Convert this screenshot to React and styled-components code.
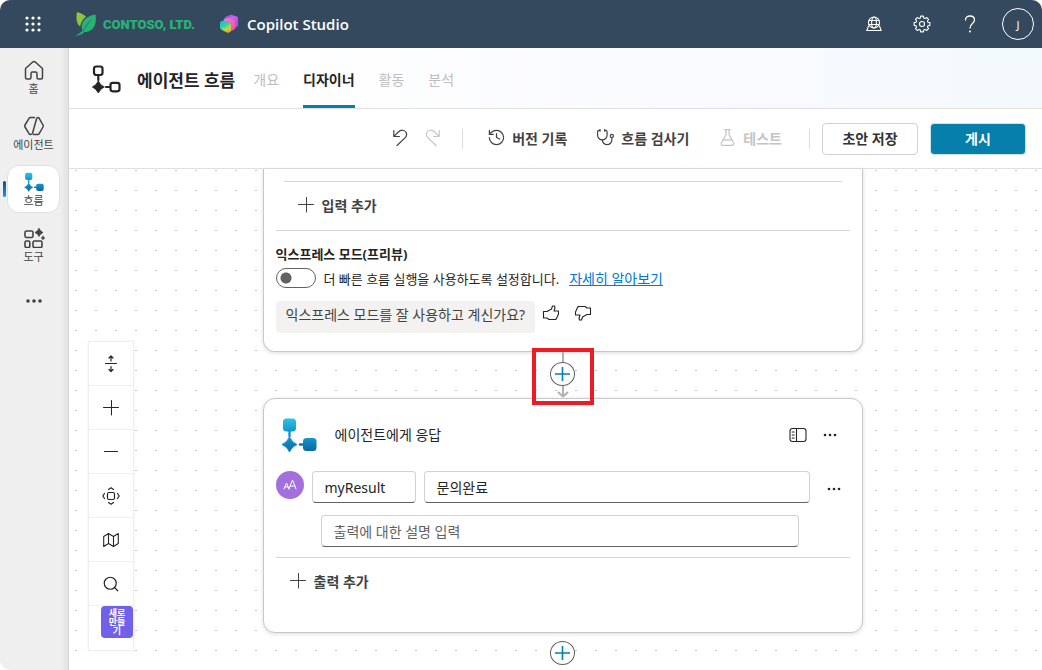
import React, { useState } from 'react'
import styled, { createGlobalStyle, css } from 'styled-components'
import { History, Stethoscope, FlaskConical, Search } from 'lucide-react'

const GlobalStyle = createGlobalStyle`
    * {
        box-sizing : border-box;
    }
    body {
        margin : 0;
        background-color : #ffffff;
        color : #242424;
        font-family : "Noto Sans", "Noto Sans CJK KR", sans-serif;
        font-size : 14px;
    }
    button, input {
        font-family : inherit;
        color : inherit;
    }
    svg {
        display : block;
        flex-shrink : 0;
    }
`;

const Page = styled.div`
    display : flex;
    flex-direction : column;
    min-height : 100vh;
    border-radius : 10px;
    overflow : hidden;
`;
const TopBar = styled.header`
    display : flex;
    align-items : center;
    justify-content : space-between;
    height : 48px;
    padding-left : 17px;
    background-color : #34495e;
    color : #ffffff;
`;
const Group = styled.div`
    display : flex;
    align-items : center;
`;
const IconButton = styled.button`
    display : flex;
    align-items : center;
    justify-content : center;
    width : ${(props) => props.$size || 16}px;
    height : ${(props) => props.$height || props.$size || 16}px;
    padding : 0;
    border : none;
    background : none;
    cursor : pointer;
`;
const Brand = styled.a`
    display : flex;
    align-items : center;
    gap : 6px;
    margin : 0 24px 0 26px;
    color : #27b376;
    font-family : Roboto, sans-serif;
    font-size : 13px;
    font-weight : 900;
    text-decoration : none;
    white-space : nowrap;
`;
const Product = styled.a`
    display : flex;
    align-items : center;
    gap : 8px;
    color : #ffffff;
    font-family : "Open Sans", sans-serif;
    font-size : 15px;
    font-weight : 600;
    text-decoration : none;
    white-space : nowrap;
`;
const Avatar = styled.span`
    display : flex;
    align-items : center;
    justify-content : center;
    width : 32px;
    height : 32px;
    border : 1px solid #ffffff;
    border-radius : 50%;
    font-size : 11px;
`;

const Body = styled.div`
    display : flex;
    flex : 1;
`;
const Sidebar = styled.nav`
    display : flex;
    flex-direction : column;
    gap : 8px;
    flex-shrink : 0;
    width : 69px;
    padding : 5px 8px 0 7px;
    border-right : 1px solid #d6d6d6;
    background : linear-gradient(to right, #efefef 60px, #e2e2e2);
`;
const NavItem = styled.a`
    position : relative;
    display : flex;
    flex-direction : column;
    align-items : center;
    gap : 1px;
    height : 48px;
    padding-top : 6px;
    border : 1px solid transparent;
    border-radius : 12px;
    color : #424242;
    font-size : 11px;
    line-height : 16px;
    text-decoration : none;
    white-space : nowrap;
    ${(props) => props.$active && css`
        border-color : #e0e0e0;
        background-color : #ffffff;
        &::before {
            content : "";
            position : absolute;
            left : -5px;
            top : 15px;
            width : 3px;
            height : 16px;
            border-radius : 2px;
            background : linear-gradient(#0b4a8f, #1a9bd0);
        }
    `}
`;
const MoreNav = styled.div`
    display : flex;
    align-items : center;
    justify-content : center;
    height : 48px;
    color : #424242;
`;

const Main = styled.main`
    display : flex;
    flex-direction : column;
    flex : 1;
    min-width : 0;
`;
const PageHeader = styled.div`
    display : flex;
    align-items : center;
    height : 61px;
    padding : 3px 23px 0;
    border-bottom : 1px solid #e0e0e0;
    background : linear-gradient(to right, #ffffff 20%, #f9faff 60%, #f4f9fb);
`;
const Title = styled.h1`
    margin : 0 18px 0 15px;
    font-size : 17px;
    font-weight : 700;
    white-space : nowrap;
`;
const Tabs = styled.div`
    display : flex;
    align-self : stretch;
    gap : 24px;
`;
const Tab = styled.button`
    padding : 2px 0 0;
    border : none;
    border-bottom : 3px solid ${(props) => (props.$active ? "#067fab" : "transparent")};
    background : none;
    color : ${(props) => (props.$active ? "#242424" : "#bdbdbd")};
    font-size : 14px;
    font-weight : ${(props) => (props.$active ? 700 : 400)};
    white-space : nowrap;
`;

const Toolbar = styled.div`
    display : flex;
    align-items : center;
    justify-content : flex-end;
    gap : 5px;
    height : 60px;
    padding-right : 16px;
    border-bottom : 1px solid #e0e0e0;
    background-color : #ffffff;
`;
const ToolButton = styled.button`
    display : flex;
    align-items : center;
    gap : 6px;
    height : 32px;
    padding : 0 ${(props) => (props.$iconOnly ? 6 : 12)}px 2px;
    border : none;
    background : none;
    color : #424242;
    font-size : 14px;
    font-weight : 700;
    white-space : nowrap;
    &:disabled {
        color : #c4c4c4;
    }
`;
const Separator = styled.span`
    width : 1px;
    height : 20px;
    margin : 0 7px 0 10px;
    background-color : #dcdcdc;
`;
const Actions = styled.div`
    display : flex;
    gap : 12px;
`;
const ActionButton = styled.button`
    width : 96px;
    height : 32px;
    padding : 0 0 2px;
    border : 1px solid ${(props) => (props.$primary ? "#cfe3ec" : "#d1d1d1")};
    border-radius : 4px;
    background-color : ${(props) => (props.$primary ? "#067fab" : "#ffffff")};
    color : ${(props) => (props.$primary ? "#ffffff" : "#333333")};
    font-size : 14px;
    font-weight : 700;
`;

const Canvas = styled.div`
    position : relative;
    display : flex;
    flex-direction : column;
    align-items : center;
    flex : 1;
    padding-left : 14px;
    background : conic-gradient(from 90deg at 18px 19px, #c4c4c4 90deg, #ffffff 0) 8px 2px / 20px 20px;
`;
const Card = styled.section`
    width : 600px;
    max-width : 100%;
    padding : 12px 12px ${(props) => (props.$cut ? 18 : 26)}px;
    border : 1px solid #c8c8c8;
    border-radius : 12px;
    background-color : #ffffff;
    box-shadow : 0 1px 4px rgba(0, 0, 0, 0.14);
    ${(props) => props.$cut && css`
        border-top : none;
        border-radius : 0 0 12px 12px;
    `}
`;
const Section = styled.div`
    border-top : 1px solid #d6d6d6;
    margin : 0 ${(props) => (props.$inset ? 8 : 0)}px;
`;
const AddButton = styled.button`
    display : flex;
    align-items : center;
    gap : 8px;
    height : 48px;
    padding : 0 14px 2px;
    border : none;
    background : none;
    color : #424242;
    font-size : 14px;
    font-weight : 700;
`;
const SubTitle = styled.h2`
    margin : 14px 0 5px;
    font-size : 13px;
    font-weight : 700;
    line-height : 18px;
`;
const SwitchRow = styled.div`
    display : flex;
    align-items : center;
    height : 20px;
    font-size : 13px;
    white-space : nowrap;
`;
const Switch = styled.input`
    appearance : none;
    width : 40px;
    height : 20px;
    margin : 0 8px 0 0;
    border : 1px solid #616161;
    border-radius : 10px;
    background : radial-gradient(circle at ${(props) => (props.checked ? "29px" : "9px")} 9px, #616161 5px, #ffffff 6px);
`;
const LearnMore = styled.a`
    margin-left : 10px;
    color : #0078d4;
    font-size : 14px;
`;
const Feedback = styled.div`
    display : flex;
    align-items : flex-start;
    margin-top : 13px;
`;
const Question = styled.span`
    height : 32px;
    padding : 0 10px;
    border-radius : 4px;
    background-color : #f3f2f1;
    color : #424242;
    line-height : 28px;
    white-space : nowrap;
`;
const Connector = styled.div`
    position : relative;
    display : flex;
    flex-direction : column;
    align-items : center;
    padding-top : ${(props) => (props.$end ? 8 : 0)}px;
    height : ${(props) => (props.$end ? 32 : 46)}px;
`;
const Line = styled.span`
    width : 2px;
    height : 10px;
    background-color : #b3b0ad;
`;
const Insert = styled.button`
    display : flex;
    align-items : center;
    justify-content : center;
    width : 25px;
    height : 24px;
    padding : 0;
    border : 1px solid #616161;
    border-radius : 50%;
    background-color : #ffffff;
    color : #067fab;
`;
const Highlight = styled.div`
    position : absolute;
    top : -4px;
    left : 50%;
    width : 62px;
    height : 57px;
    margin-left : -31px;
    border : 4px solid #ed1c24;
    pointer-events : none;
`;
const CardHeader = styled.div`
    display : flex;
    align-items : center;
    height : 48px;
    padding : 0 12px 0 5px;
`;
const CardTitle = styled.h2`
    flex : 1;
    margin : 0 18px;
    padding-bottom : 2px;
    font-size : 14px;
    font-weight : 400;
`;
const FieldRow = styled.div`
    display : flex;
    align-items : flex-start;
    gap : 8px;
    padding : 12px 8px 0 0;
`;
const TypeBadge = styled.span`
    display : flex;
    align-items : center;
    justify-content : center;
    flex-shrink : 0;
    width : 28px;
    height : 28px;
    border-radius : 50%;
    background-color : #a36fdc;
    color : #ffffff;
`;
const Field = styled.input`
    width : ${(props) => props.$width || "auto"};
    flex : ${(props) => (props.$width ? "none" : "1")};
    min-width : 0;
    height : 32px;
    padding : 0 12px;
    border : 1px solid #d1d1d1;
    border-bottom-color : #616161;
    border-radius : 4px;
    background-color : #ffffff;
    font-size : 14px;
    &::placeholder {
        color : #616161;
        opacity : 1;
    }
`;
const DescriptionRow = styled.div`
    display : flex;
    padding : 8px 51px 10px 45px;
`;
const Gap = styled.span`
    width : ${(props) => props.$width}px;
`;

const Palette = styled.div`
    position : absolute;
    left : 19px;
    bottom : 19px;
    width : 46px;
    border : 1px solid #efefef;
    background-color : #ffffff;
    box-shadow : 0 0 2px rgba(0, 0, 0, 0.08);
`;
const PaletteButton = styled(IconButton)`
    width : 44px;
    height : 44px;
    border-bottom : 1px solid #efefef;
    color : #242424;
`;
const PaletteEnd = styled.div`
    display : flex;
    align-items : flex-start;
    justify-content : flex-end;
    height : 44px;
`;
const NewBadge = styled.button`
    width : 32px;
    height : 32px;
    padding : 0 6px 2px;
    border : none;
    border-radius : 4px;
    background-color : #7160e8;
    color : #ffffff;
    font-size : 9px;
    font-weight : 700;
    line-height : 9px;
    word-break : break-all;
`;

const star = (cx, cy, r) => {
    const k = r * 0.3;
    return `M${cx} ${cy - r}Q${cx + k} ${cy - k} ${cx + r} ${cy}Q${cx + k} ${cy + k} ${cx} ${cy + r}Q${cx - k} ${cy + k} ${cx - r} ${cy}Q${cx - k} ${cy - k} ${cx} ${cy - r}Z`;
};

const gear = () => {
    const points = [];
    for (let i = 0; i < 8; i++) {
        [[-16, 6.2], [-10, 8], [10, 8], [16, 6.2]].forEach(([offset, r]) => {
            const a = ((i * 45 + offset) * Math.PI) / 180;
            points.push(`${(9 + r * Math.sin(a)).toFixed(2)} ${(9 - r * Math.cos(a)).toFixed(2)}`);
        });
    }
    return "M" + points.join("L") + "Z";
};

const Svg = ({ w = 16, h, box, children, ...rest }) => (
    <svg width={w} height={h || w} viewBox={box || `0 0 ${w} ${h || w}`} fill="none" stroke="currentColor" strokeWidth="1.1" strokeLinecap="round" strokeLinejoin="round" aria-hidden="true" {...rest}>
        {children}
    </svg>
);

const Dots = ({ size = 16, r = 1.3, gap = 5 }) => (
    <Svg w={size} fill="currentColor" stroke="none">
        {[-1, 0, 1].map((n) => <circle key={n} cx={size / 2 + n * gap} cy={size / 2} r={r} />)}
    </Svg>
);

const Waffle = () => (
    <Svg fill="currentColor" stroke="none">
        {[2, 8, 14].map((y) => [2, 8, 14].map((x) => <circle key={x + "-" + y} cx={x} cy={y} r="1.6" />))}
    </Svg>
);

const Leaf = () => (
    <Svg w={22} h={24} stroke="none">
        <path d="M2 0C1 5 1 11 5 14.500C6 10 8 7 11 4.500C8.500 2 5 1 2 0Z" fill="#8cc63f" />
        <path d="M20.500 2.500C11 4 4.500 10 7.500 18.500C5.500 21 3 22.500 0 23.500C4 24 7 22.500 9.500 20C19 20 22 12 20.500 2.500Z" fill="#27b376" />
        <path d="M8 19.500C10 15 12.500 11.500 16 8" fill="none" stroke="#34495e" strokeWidth="0.600" />
    </Svg>
);

const CopilotLogo = () => (
    <Svg w={20} stroke="none">
        <defs>
            <linearGradient id="cpBack" x1="0" y1="0" x2="1" y2="1">
                <stop offset="0" stopColor="#3c6ff5" />
                <stop offset="0.4" stopColor="#d858f0" />
                <stop offset="1" stopColor="#8a4af0" />
            </linearGradient>
            <linearGradient id="cpMid" x1="0" y1="0" x2="1" y2="1">
                <stop offset="0" stopColor="#ff7ac0" />
                <stop offset="1" stopColor="#f0509a" />
            </linearGradient>
            <linearGradient id="cpFront" x1="0.1" y1="0" x2="0.6" y2="1">
                <stop offset="0" stopColor="#1fb4f0" />
                <stop offset="0.45" stopColor="#2fd0a8" />
                <stop offset="0.75" stopColor="#b8dc40" />
                <stop offset="1" stopColor="#f5a03c" />
            </linearGradient>
        </defs>
        <path d="M6 3L11 1Q12 .6 13 1L18 2.500Q19 3 19 4V11Q19 12.500 18 13L12 16L5 10Z" fill="url(#cpBack)" />
        <path d="M5 5L9 4Q10 3.600 11 4L15 6Q16 6.500 16 7.500V14Q16 15.500 14.500 16L10 18L4 12Z" fill="url(#cpMid)" />
        <path d="M1 9Q1 7.500 2.500 7L4.500 6.500Q6 6.200 7 7L11 9Q12 9.800 12 11V17L10 18.500Q9 19 8 18.500L3 16Q1 15 1 13.500Z" fill="url(#cpFront)" />
    </Svg>
);

const FlowOutline = () => (
    <Svg w={30} strokeWidth="2.200">
        <rect x="2" y="1.500" width="8.500" height="8.500" rx="2.200" />
        <path d="M6.300 10.500V15M14 22H17.500" />
        <rect x="18.500" y="17.800" width="9" height="8.500" rx="2.200" />
        <path d={star(6.3, 22, 6)} fill="currentColor" strokeWidth="0.800" />
    </Svg>
);

const FlowLogo = ({ size, id }) => (
    <Svg w={size} box="0 0 36 36" stroke="none">
        <defs>
            <linearGradient id={id + "a"} x1="0" y1="0" x2="0" y2="1">
                <stop offset="0" stopColor="#2cc3ea" />
                <stop offset="1" stopColor="#1296c8" />
            </linearGradient>
            <linearGradient id={id + "b"} x1="0" y1="0" x2="0" y2="1">
                <stop offset="0" stopColor="#1596cc" />
                <stop offset="1" stopColor="#0a67a3" />
            </linearGradient>
        </defs>
        <rect x="2" y="1.500" width="13" height="13" rx="3.500" fill={`url(#${id}a)`} />
        <path d="M8.500 14V19" stroke="#1296c8" strokeWidth="2.400" />
        <path d="M19 27.500H23" stroke="#0d74ae" strokeWidth="2.400" />
        <rect x="22" y="21" width="13.500" height="13" rx="3.500" fill={`url(#${id}b)`} />
        <path d={star(8.5, 27.5, 7.5)} fill={`url(#${id}b)`} stroke="#0f80b8" strokeWidth="0.800" />
    </Svg>
);

const HomeIcon = () => (
    <Svg w={20} strokeWidth="1.500">
        <path d="M1.500 8.500L9 1.800Q10 1 11 1.800L18.500 8.500V17.500Q18.500 19 17 19H14.500Q13 19 13 17.500V13.500Q13 12 11.500 12H8.500Q7 12 7 13.500V17.500Q7 19 5.500 19H3Q1.500 19 1.500 17.500Z" />
    </Svg>
);

const AgentIcon = () => (
    <Svg w={20} strokeWidth="1.500">
        <path d="M10.500 1.500H6.500Q5.500 1.500 5 2.400L1 9Q.5 10 1 11L5 17.600Q5.500 18.500 6.500 18.500Q8 18.500 8.500 17.200L12.500 3Q13 1.500 14 1.500Q14.700 1.500 15.200 2.400L19 9Q19.500 10 19 11L15.200 17.600Q14.700 18.500 13.600 18.500H9.500" />
    </Svg>
);

const ToolsIcon = () => (
    <Svg w={22} h={20} strokeWidth="1.600">
        <rect x="2" y="3" width="8" height="6.500" rx="1.500" />
        <rect x="2" y="13" width="4.800" height="6.500" rx="1.500" />
        <rect x="10" y="13" width="9" height="6.500" rx="1.500" />
        <path d={star(16, 4.5, 4)} fill="currentColor" strokeWidth="0.800" />
        <path d={star(20, 10, 1.8)} fill="currentColor" strokeWidth="0.600" />
    </Svg>
);

const GlobeIcon = () => (
    <Svg strokeWidth="1.100">
        <circle cx="8" cy="6.500" r="5.500" />
        <ellipse cx="8" cy="6.500" rx="2.400" ry="5.500" />
        <path d="M3 4.500H13M3 8.500H13M2.500 10L.8 14.500H15.200L13.500 10" />
    </Svg>
);

const UndoIcon = ({ flip }) => (
    <Svg w={16} h={18} transform={flip ? "scale(-1 1)" : undefined} strokeWidth="1.200">
        <path d="M1.800 1.500V7.500H7.500M2 7.300L6.300 3C9 .4 12.500 .8 14 3.200C15.200 5.400 14.500 7.400 13 8.900L5 16.500" />
    </Svg>
);

const ThumbIcon = ({ down }) => (
    <Svg w={18} h={16} transform={down ? "rotate(180)" : undefined}>
        <path d="M1.500 6.500H5L9.500 4L10.500 1H12.500L13 3L12 6H16.500V9L14.500 13.500L13.500 14.500H7L5 13H1.500Z" />
    </Svg>
);

const PanelIcon = () => (
    <Svg w={18} h={16} strokeWidth="1.100">
        <rect x="1" y="1.500" width="16" height="13" rx="2.500" />
        <path d="M7.500 1.500V14.500M3.200 5H5.200M3.200 8H5.200M3.200 11H5.200" />
    </Svg>
);

const PlusIcon = ({ minus }) => (
    <Svg strokeWidth="1">
        <path d={minus ? "M1.500 7.500H14.500" : "M.5 7.500H15.500M8.500 .5V15"} />
    </Svg>
);

const InsertIcon = () => (
    <Svg w={15} h={14} strokeWidth="1.600">
        <path d="M.5 7H14.500M7.500 0V14" />
    </Svg>
);

const FitHeightIcon = () => (
    <Svg w={18} strokeWidth="1.200">
        <path d="M3.500 8.500H14.500M9 6V1M7 3L9 1L11 3M9 11.500V16.500M7 14.500L9 16.500L11 14.500" />
    </Svg>
);

const FitViewIcon = () => (
    <Svg w={18} strokeWidth="1.200">
        <rect x="5.500" y="5.500" width="7" height="7" rx="1.500" />
        <path d="M6.500 2.500L9 .8L11.500 2.500M6.500 15.500L9 17.200L11.500 15.500M2.500 6.500L.8 9L2.500 11.500M15.500 6.500L17.200 9L15.500 11.500" />
    </Svg>
);

const FoldedMapIcon = () => (
    <Svg>
        <path d="M.7 4.500L5.500 1.500L10.500 4.500L15.300 1.500V11.500L10.500 14.500L5.500 11.500L.7 14.500ZM5.500 1.500V11.500M10.500 4.500V14.500" />
    </Svg>
);

const TextTypeIcon = () => (
    <Svg w={16} strokeWidth="1">
        <path d="M2 12L4.500 6L7 12M3 10H6M7 12L10.500 3L14 12M8.200 9H12.800" />
    </Svg>
);

const ArrowTail = () => (
    <Svg w={14} h={12} stroke="#b3b0ad" strokeWidth="2">
        <path d="M7 0V10M2.500 6.500L7 10.500L11.500 6.500" />
    </Svg>
);

const thin = { strokeWidth: 1.2, absoluteStrokeWidth: true, "aria-hidden": true };

const App = () => {
    const [express, setExpress] = useState(false);
    const [name, setName] = useState("myResult");
    const [value, setValue] = useState("문의완료");
    const [description, setDescription] = useState("");

    return (
        <Page>
            <GlobalStyle />
            <TopBar>
                <Group>
                    <IconButton $size={32} aria-label="앱 시작 관리자"><Waffle /></IconButton>
                    <Brand href="#contoso"><Leaf />CONTOSO, LTD.</Brand>
                    <Product href="#studio"><CopilotLogo />Copilot Studio</Product>
                </Group>
                <Group>
                    <IconButton $size={48} aria-label="환경"><GlobeIcon /></IconButton>
                    <IconButton $size={48} aria-label="설정">
                        <Svg w={18}><path d={gear()} /><circle cx="9" cy="9" r="2.500" /></Svg>
                    </IconButton>
                    <IconButton $size={48} aria-label="도움말">
                        <Svg w={12} h={18} strokeWidth="1.300">
                            <path d="M1.500 5C1.500 2.500 3.500 1 6 1C8.500 1 10.500 2.500 10.500 5C10.500 8.500 6 8.500 6 13" />
                            <circle cx="6" cy="16.500" r="0.400" />
                        </Svg>
                    </IconButton>
                    <IconButton $size={48} aria-label="계정"><Avatar>J</Avatar></IconButton>
                </Group>
            </TopBar>
            <Body>
                <Sidebar>
                    <NavItem href="#home"><HomeIcon />홈</NavItem>
                    <NavItem href="#agents"><AgentIcon />에이전트</NavItem>
                    <NavItem href="#flows" $active><FlowLogo size={20} id="nav" />흐름</NavItem>
                    <NavItem href="#tools"><ToolsIcon />도구</NavItem>
                    <MoreNav><IconButton $size={24} aria-label="더 보기"><Dots size={18} r={1.8} gap={6} /></IconButton></MoreNav>
                </Sidebar>
                <Main>
                    <PageHeader>
                        <FlowOutline />
                        <Title>에이전트 흐름</Title>
                        <Tabs>
                            <Tab>개요</Tab>
                            <Tab $active>디자이너</Tab>
                            <Tab>활동</Tab>
                            <Tab>분석</Tab>
                        </Tabs>
                    </PageHeader>
                    <Toolbar>
                        <ToolButton $iconOnly aria-label="실행 취소"><UndoIcon /></ToolButton>
                        <ToolButton $iconOnly disabled aria-label="다시 실행"><UndoIcon flip /></ToolButton>
                        <Separator />
                        <ToolButton><History size={19} {...thin} />버전 기록</ToolButton>
                        <ToolButton><Stethoscope size={19} {...thin} />흐름 검사기</ToolButton>
                        <ToolButton disabled><FlaskConical size={19} {...thin} />테스트</ToolButton>
                        <Separator />
                        <Actions>
                            <ActionButton>초안 저장</ActionButton>
                            <ActionButton $primary>게시</ActionButton>
                        </Actions>
                    </Toolbar>
                    <Canvas>
                        <Card $cut>
                            <Section $inset>
                                <AddButton><PlusIcon />입력 추가</AddButton>
                            </Section>
                            <Section>
                                <SubTitle>익스프레스 모드(프리뷰)</SubTitle>
                                <SwitchRow>
                                    <Switch id="express" type="checkbox" role="switch" checked={express} onChange={(e) => setExpress(e.target.checked)} />
                                    <label htmlFor="express">더 빠른 흐름 실행을 사용하도록 설정합니다.</label>
                                    <LearnMore href="#learn">자세히 알아보기</LearnMore>
                                </SwitchRow>
                                <Feedback>
                                    <Question>익스프레스 모드를 잘 사용하고 계신가요?</Question>
                                    <Gap $width={4} />
                                    <IconButton $size={24} aria-label="좋아요"><ThumbIcon /></IconButton>
                                    <Gap $width={8} />
                                    <IconButton $size={24} aria-label="싫어요"><ThumbIcon down /></IconButton>
                                </Feedback>
                            </Section>
                        </Card>
                        <Connector>
                            <Line />
                            <Insert aria-label="작업 삽입"><InsertIcon /></Insert>
                            <ArrowTail />
                            <Highlight />
                        </Connector>
                        <Card>
                            <CardHeader>
                                <FlowLogo size={36} id="card" />
                                <CardTitle>에이전트에게 응답</CardTitle>
                                <IconButton $size={18} aria-label="패널 열기"><PanelIcon /></IconButton>
                                <Gap $width={15} />
                                <IconButton aria-label="추가 옵션"><Dots /></IconButton>
                            </CardHeader>
                            <FieldRow>
                                <TypeBadge><TextTypeIcon /></TypeBadge>
                                <Field $width="104px" aria-label="출력 이름" value={name} onChange={(e) => setName(e.target.value)} />
                                <Field aria-label="출력 값" value={value} onChange={(e) => setValue(e.target.value)} />
                                <Gap />
                                <IconButton $height={36} aria-label="출력 옵션"><Dots /></IconButton>
                            </FieldRow>
                            <DescriptionRow>
                                <Field aria-label="설명" placeholder="출력에 대한 설명 입력" value={description} onChange={(e) => setDescription(e.target.value)} />
                            </DescriptionRow>
                            <Section>
                                <AddButton><PlusIcon />출력 추가</AddButton>
                            </Section>
                        </Card>
                        <Connector $end>
                            <Insert aria-label="작업 추가"><InsertIcon /></Insert>
                        </Connector>
                        <Palette>
                            <PaletteButton aria-label="높이 맞춤"><FitHeightIcon /></PaletteButton>
                            <PaletteButton aria-label="확대"><PlusIcon /></PaletteButton>
                            <PaletteButton aria-label="축소"><PlusIcon minus /></PaletteButton>
                            <PaletteButton aria-label="화면에 맞춤"><FitViewIcon /></PaletteButton>
                            <PaletteButton aria-label="미니맵"><FoldedMapIcon /></PaletteButton>
                            <PaletteButton aria-label="검색"><Search size={18} {...thin} /></PaletteButton>
                            <PaletteEnd><NewBadge>새로만들기</NewBadge></PaletteEnd>
                        </Palette>
                    </Canvas>
                </Main>
            </Body>
        </Page>
    )
}

export default App
